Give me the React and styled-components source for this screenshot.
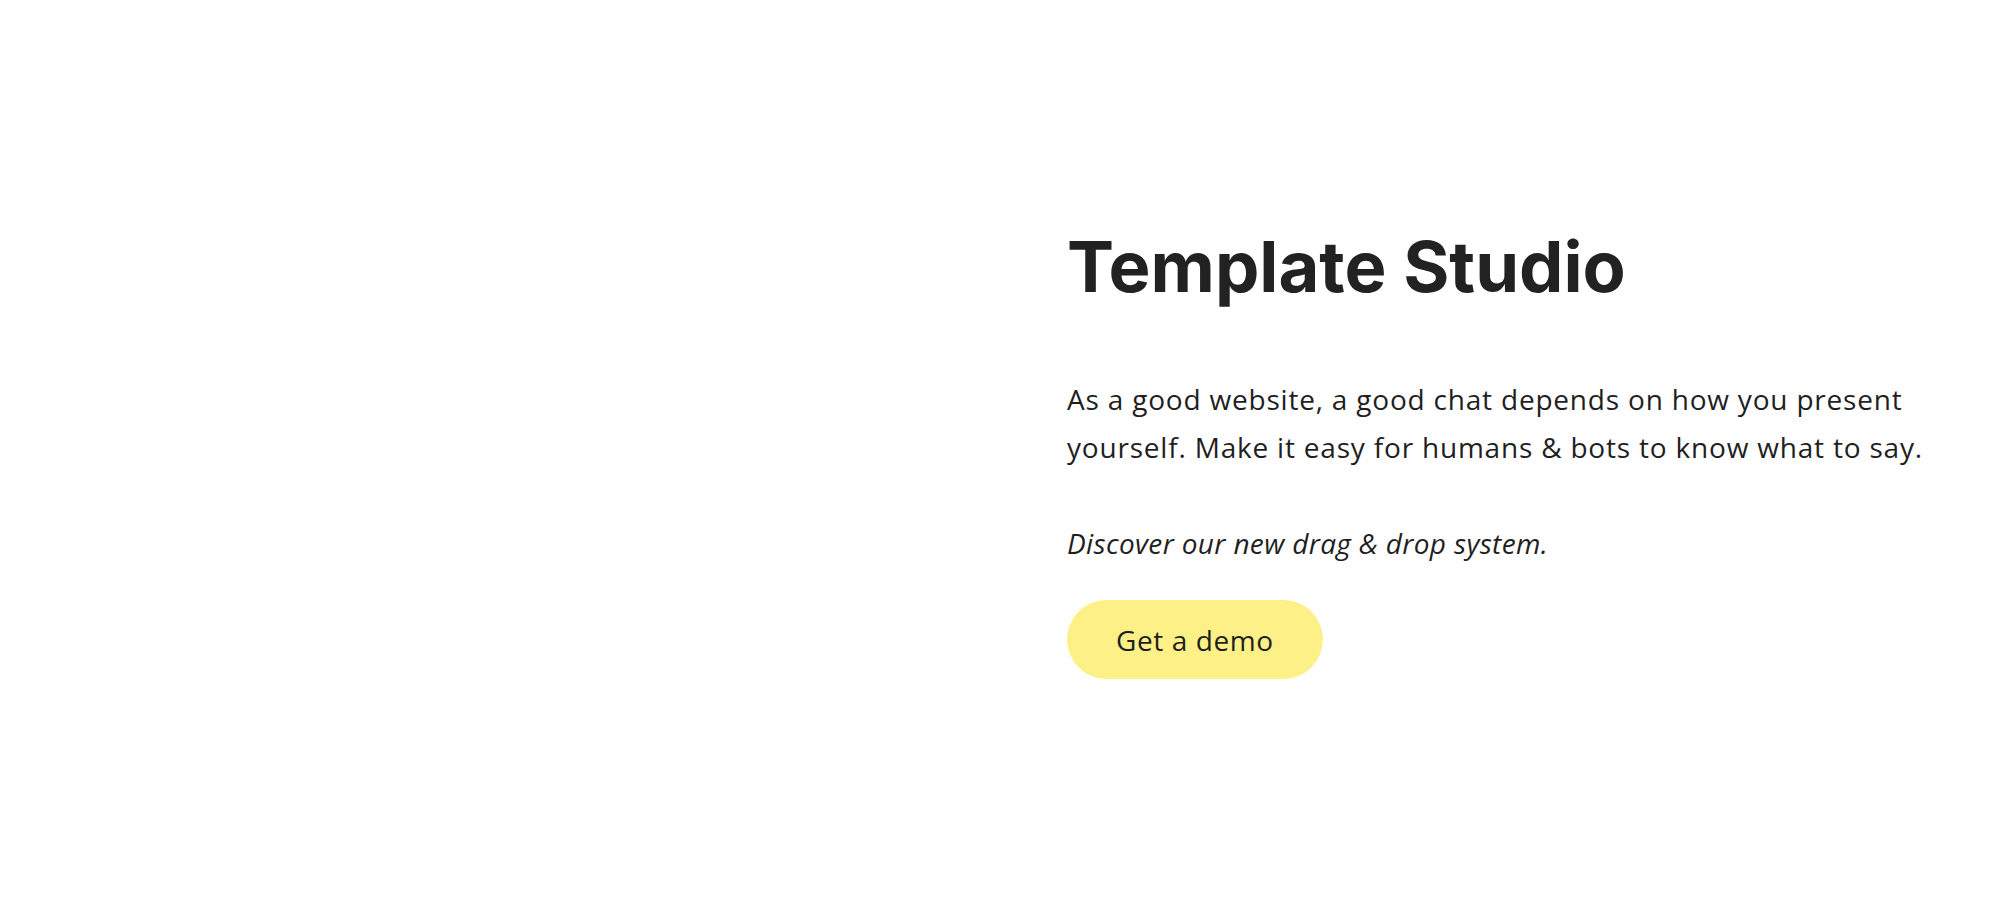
import React from "react";
import styled, { createGlobalStyle } from "styled-components";

const GlobalStyle = createGlobalStyle`
  html, body { margin: 0; padding: 0; background: #ffffff; }
  body { font-family: "Open Sans", "Liberation Sans", sans-serif; color: #1f1f1f; }
  * { box-sizing: border-box; }
`;

const Section = styled.section`
  display: grid;
  grid-template-columns: 1fr 1fr;
  height: 906px;
  width: 100%;
`;

const MediaColumn = styled.div`
  background: #ffffff;
`;

const Content = styled.div`
  display: flex;
  flex-direction: column;
  align-items: flex-start;
  padding: 225px 60px 0 62px;
`;

const Title = styled.h1`
  margin: 0;
  font-family: Inter, "Liberation Sans", sans-serif;
  font-weight: 700;
  font-size: 70.5px;
  line-height: 84px;
  letter-spacing: 0;
  color: #222222;
`;

const Text = styled.p`
  margin: ${(p) => p.$top}px 0 0;
  font-size: 28px;
  line-height: 48px;
  font-style: ${(p) => (p.$italic ? "italic" : "normal")};
  letter-spacing: ${(p) => (p.$italic ? "0.36px" : "0.8px")};
  color: #1f1f1f;
  max-width: 885px;
`;

const DemoButton = styled.a`
  margin-top: 33px;
  display: inline-flex;
  align-items: center;
  justify-content: center;
  height: 79px;
  padding: 0 49px;
  border-radius: 40px;
  background: #fdf087;
  color: #1f1f1f;
  font-size: 28px;
  letter-spacing: 0.6px;
  text-decoration: none;
  cursor: pointer;
`;

export default function App() {
  return (
    <>
      <GlobalStyle />
      <Section>
        <MediaColumn />
        <Content>
          <Title>Template Studio</Title>
          <Text $top={66}>
            As a good website, a good chat depends on how you present
            yourself. Make it easy for humans &amp; bots to know what to say.
          </Text>
          <Text $top={48} $italic>
            Discover our new drag &amp; drop system.
          </Text>
          <DemoButton>Get a demo</DemoButton>
        </Content>
      </Section>
    </>
  );
}
